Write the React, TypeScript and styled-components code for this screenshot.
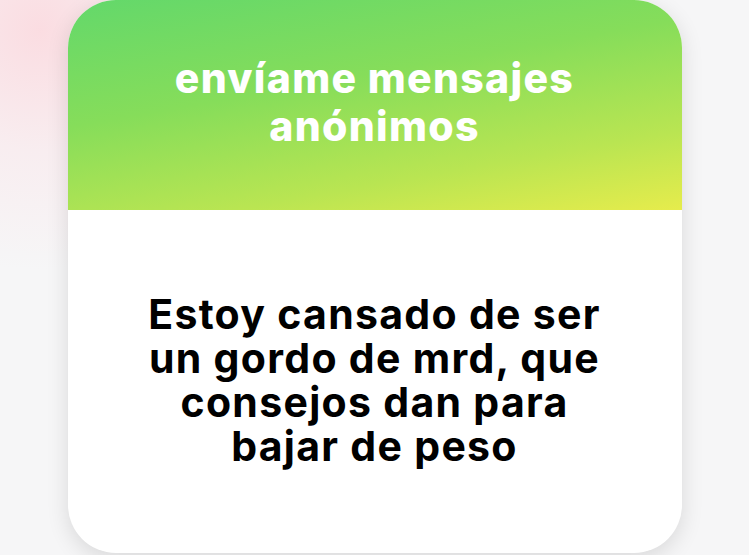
import styled, { createGlobalStyle } from "styled-components";

const GlobalStyle = createGlobalStyle`
  * {
    box-sizing: border-box;
  }

  html, body {
    margin: 0;
    padding: 0;
    height: 100%;
  }

  body {
    background-color: #f6f6f7;
    background-image: radial-gradient(circle at 40px 30px, rgba(252, 214, 220, 0.8) 0, rgba(252, 220, 226, 0.35) 120px, rgba(246, 246, 247, 0) 240px);
    font-family: Inter, "Noto Sans", sans-serif;
    overflow: hidden;
  }
`;

export default function App() {
  return (
    <>
      <GlobalStyle />
      <Page>
        <Card>
          <Header>
            <Title>envíame mensajes anónimos</Title>
          </Header>
          <Body>
            <Message>Estoy cansado de ser un gordo de mrd, que consejos dan para bajar de peso</Message>
          </Body>
        </Card>
      </Page>
    </>
  );
}

const Page = styled.div`
  width: 749px;
  height: 555px;
  display: flex;
  justify-content: center;
  align-items: flex-start;
`;

const Card = styled.div`
  width: 614px;
  height: 553px;
  border-radius: 48px;
  overflow: hidden;
  display: flex;
  flex-direction: column;
  background-color: #ffffff;
  box-shadow: 0 6px 22px rgba(0, 0, 0, 0.12);
`;

const Header = styled.div`
  height: 210px;
  display: flex;
  align-items: center;
  justify-content: center;
  padding: 0 80px 6px;
  background: linear-gradient(170deg, #63d86b 0%, #86dd5a 40%, #b9e552 75%, #e6ec4c 100%);
`;

const Title = styled.h1`
  margin: 0;
  color: #ffffff;
  font-size: 41px;
  font-weight: 800;
  line-height: 48px;
  letter-spacing: 1.3px;
  text-align: center;
`;

const Body = styled.div`
  flex: 1;
  display: flex;
  align-items: center;
  justify-content: center;
  padding: 0 60px 4px;
`;

const Message = styled.p`
  margin: 0;
  max-width: 480px;
  color: #000000;
  font-size: 41px;
  font-weight: 700;
  line-height: 44px;
  letter-spacing: 1.3px;
  text-align: center;
`;
